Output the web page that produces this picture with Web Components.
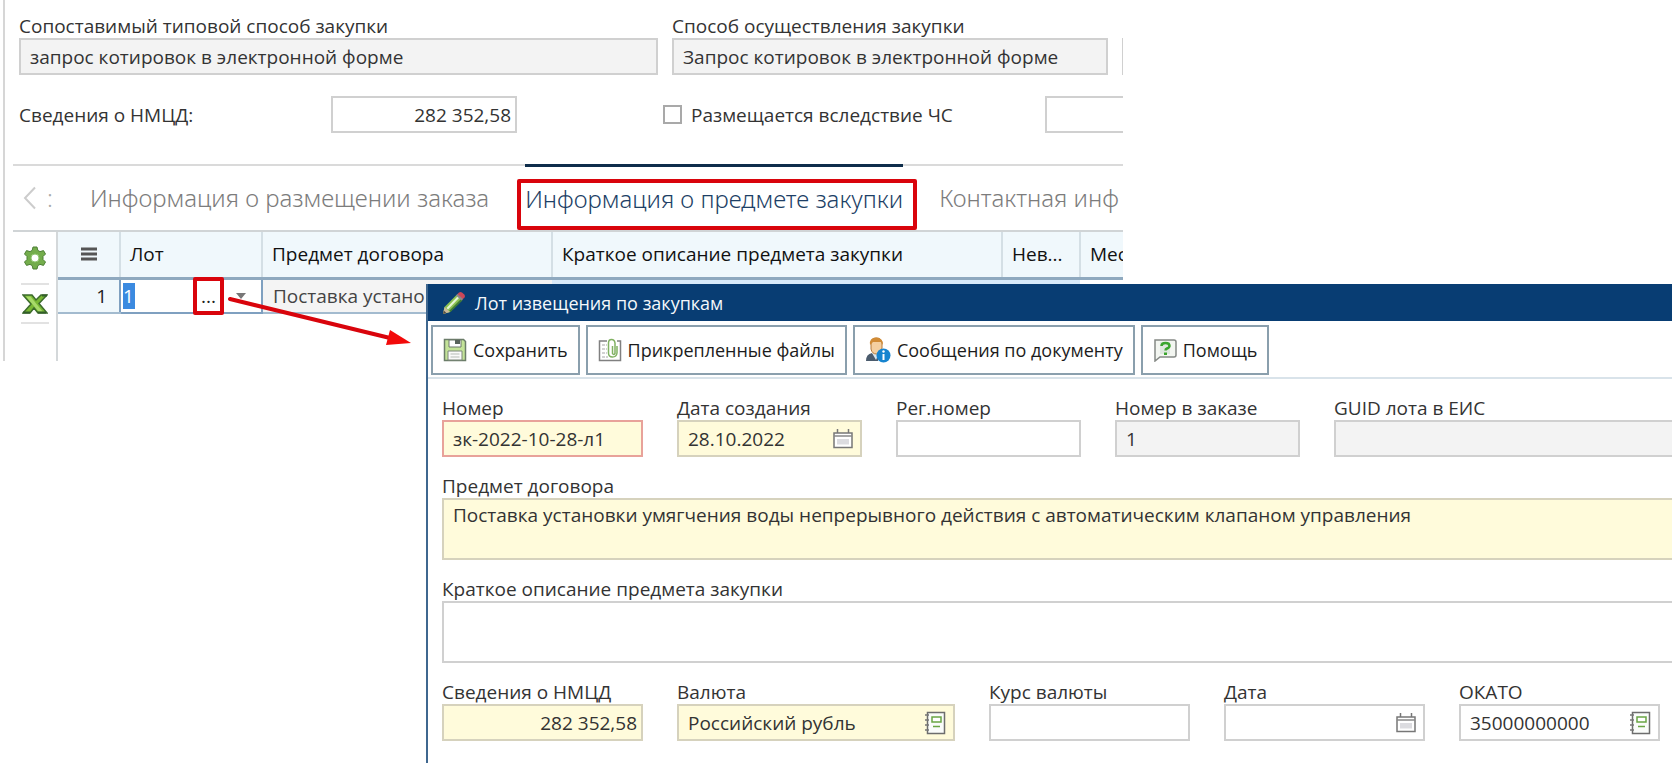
<!DOCTYPE html>
<html lang="ru">
<head>
<meta charset="utf-8">
<title>Лот извещения по закупкам</title>
<style>
  html, body { margin: 0; background: #fff; }
  body { font: 19px/24px "Open Sans", "Noto Sans", sans-serif; color: #333; }
</style>
</head>
<body>
<procurement-app></procurement-app>

<script>
const ICONS = {
  gear: [24, 24, `<g fill="#74ad4c" stroke="#4d7f35"><path d="M10 1h4l.8 3.400 2.200 1.200 3.500-1 2 3.400-2.500 2.500v3l2.500 2.500-2 3.400-3.500-1-2.200 1.200L14 23h-4l-.8-3.400L7 18.400l-3.500 1-2-3.400L4 13.500v-3L1.500 8l2-3.400 3.500 1 2.200-1.200z"/></g><circle cx="12" cy="12" r="4" fill="#fff" stroke="#8fc46f"/>`],
  excel: [26, 20, `<path d="M1 1h9l4 5 5-5h6l-8 8.500 8 9.500h-9l-4-5-4 5H1l8-9z" fill="#79b834" stroke="#3c6b2c" stroke-width="1.500"/><path d="M4 2.500h4.500L20.500 17.500h-4z" fill="#a8da6a"/><path d="M1 18.500h7M16 18.500h8M20 1.500h5" stroke="#335e2a" stroke-width="2"/>`],
  menu: [16, 14, `<path d="M0 2h16M0 7h16M0 12h16" stroke="#555" stroke-width="3"/>`],
  back: [14, 24, `<path d="M12 1.500 2 12l10 10.500" fill="none" stroke="#ccc" stroke-width="2"/>`],
  down: [10, 6, `<path d="M0 0h10L5 6z" fill="#777"/>`],
  pencil: [24, 24, `<path d="m1 23 1.500-7L15 3.500l5.500 5L8 21z" fill="#8cc152"/><path d="M4.500 17 16 5l1.500 1.500L6 18.500z" fill="#e6f5d5"/><path d="M7 20 19 8l1.500 1.500L8.500 21z" fill="#3f7b36"/><path d="m1 23 1.500-7L8 21z" fill="#c9b99a"/><path d="m1 23 .8-3.500 2.600 2.400z" fill="#554d43"/><path d="M15 3.500 17 1.500q1.500-1.200 3 0l2.500 2.300q1 1.400 0 2.700l-2 2z" fill="#cb4759"/><path d="m14 4.500 1.500-1.500 5.500 5-1.500 1.500z" fill="#8d8589"/>`],
  save: [24, 24, `<path d="M1.500 1.500h19l2 2v19h-21z" fill="#c3e398" stroke="#6b7d69" stroke-width="1.500"/><path d="M6 2h12v7H6z" fill="#fff" stroke="#6d796d"/><path d="M12 2h5v4h-5z" fill="#59645c"/><path d="M5 13h14v9H5z" fill="#fafafa" stroke="#7c877a"/><path d="M7.500 16h9M7.500 19h9" stroke="#b5bbb5"/>`],
  attach: [24, 24, `<path d="M9 3H1.500v19.500h21V3H19" fill="none" stroke="#808080" stroke-width="1.500"/><path d="M4 7h5M4 11h5M4 15h5M4 19h6" stroke="#c4c4c4" stroke-width="1.500" stroke-dasharray="3 1"/><path d="M14.500 8v7.500q1 2 2.500 0V5q-.5-3.500-3.500-3.500T10.500 5v10q0 4 4 4t4.500-4V8" fill="none" stroke="#80b162" stroke-width="1.500"/>`],
  message: [26, 26, `<path d="M1 24q0-7 6-8l6 4v4z" fill="#4b5b6d"/><path d="m7 16 4 7 3-7z" fill="#dce7ee"/><path d="M6 7q0-6 5.500-6T17 7v4q-1 6-5.500 6T6 12z" fill="#f5cf9f" stroke="#b57b3d"/><path d="M5 8q-1-7.500 6-7.500T18 8l-2-3H8z" fill="#d18b35"/><circle cx="18.500" cy="18.500" r="7" fill="#1684cf"/><path d="M18.500 17v6" stroke="#fff" stroke-width="2"/><circle cx="18.500" cy="14.500" r="1.200" fill="#fff"/>`],
  help: [24, 24, `<path d="M2 2h19q2 0 2 2v13q0 2-2 2H7l-5 4z" fill="#f3f6f1" stroke="#858985" stroke-width="1.500"/><path d="M7 4h10v12H7z" fill="#dfe8df"/><path d="M8.500 8q0-3 4-3T16.500 8q0 1.500-2.500 2.500-1.500.7-1.500 2" fill="none" stroke="#3aa52d" stroke-width="2.500"/><path d="M11 14.500h3v2.500h-3z" fill="#3aa52d"/>`],
  calendar: [20, 20, `<path d="M1 4h18v14.500H1z" fill="#fff" stroke="#777" stroke-width="1.500"/><path d="M1 7h18" stroke="#888" stroke-width="1.500"/><path d="M4.500 0v4M15.500 0v4" stroke="#777" stroke-width="1.500"/><path d="M4 10h12v5.500H4z" fill="#dcdce0"/>`],
  book: [22, 24, `<path d="M3.500 1.500h17v21h-17z" fill="#fafcfa" stroke="#6d6d6d" stroke-width="1.500"/><path d="M1 4h4M1 9h4M1 14h4M1 19h4" stroke="#777" stroke-width="1.500"/><path d="M8 6h9v5H8z" fill="#fff" stroke="#6aa544" stroke-width="1.500"/><path d="M9 15.500h7" stroke="#6aa544" stroke-width="1.500"/>`]
};

/* Draws one glyph of the icon set at its natural size. */
class AppIcon extends HTMLElement {
  constructor() {
    super();
    this.attachShadow({ mode: 'open' });
  }
  connectedCallback() {
    const [w, h, body] = ICONS[this.getAttribute('name')];
    this.shadowRoot.innerHTML = `<style>:host{display:inline-flex;flex:none}svg{display:block}</style>
      <svg width="${w}" height="${h}" viewBox="0 0 ${w} ${h}" aria-hidden="true">${body}</svg>`;
  }
}
customElements.define('app-icon', AppIcon);

/* Label over a text box; attributes: label, value, icon, tone, numeric, rows, readonly. */
class FormField extends HTMLElement {
  constructor() {
    super();
    this.attachShadow({ mode: 'open' });
  }
  connectedCallback() {
    const at = n => this.getAttribute(n) || '';
    const ro = this.hasAttribute('readonly') ? 'readonly' : '';
    const name = at('label') || at('name');
    const control = this.hasAttribute('rows')
      ? `<textarea id="c" ${ro}>${at('value')}</textarea>`
      : `<input id="c" type="text" value="${at('value')}" ${ro} ${at('label') ? '' : `aria-label="${name}"`}>`;
    this.shadowRoot.innerHTML = `<style>
      :host { display: block; flex: none; width: var(--w, auto); box-sizing: border-box; }
      label { display: block; height: 24px; white-space: nowrap; }
      .box { display: flex; align-items: center; box-sizing: border-box; height: 37px; border: 2px solid #d0d0d0; background: #fff; padding-right: 7px; }
      :host([rows]) .box { height: 62px; padding: 0; }
      :host([readonly]) .box { background: #f3f3f3; }
      :host([tone=required]) .box { background: #fffbdb; border-color: #d6d2bd; }
      :host([tone=error]) .box { background: #fffbdb; border-color: #e8a29a; }
      input, textarea { flex: 1; min-width: 0; width: 0; height: 100%; box-sizing: border-box; border: 0; outline: 0; background: none; margin: 0; padding: 0 0 0 9px; font: inherit; color: inherit; resize: none; overflow: hidden; }
      textarea { padding: 3px 9px; }
      :host([numeric]) .box { padding-right: 4px; }
      :host([numeric]) input { text-align: right; }
    </style>
    ${at('label') ? `<label for="c">${at('label')}</label>` : ''}
    <div class="box">${control}${at('icon') ? `<app-icon name="${at('icon')}"></app-icon>` : ''}</div>`;
  }
}
customElements.define('form-field', FormField);

/* Toolbar button: icon plus slotted caption. */
class ToolButton extends HTMLElement {
  constructor() {
    super();
    this.attachShadow({ mode: 'open' });
  }
  connectedCallback() {
    this.shadowRoot.innerHTML = `<style>
      :host { display: block; flex: none; }
      button { display: flex; align-items: center; gap: 6px; height: 50px; box-sizing: border-box; border: 2px solid #8a9fad; background: #fff; padding: 0 10px; font: inherit; font-size: 18px; color: #1c1c1c; white-space: nowrap; }
    </style><button type="button"><app-icon name="${this.getAttribute('icon')}"></app-icon><slot></slot></button>`;
  }
}
customElements.define('tool-button', ToolButton);

class TabBar extends HTMLElement {
  constructor() {
    super();
    this.attachShadow({ mode: 'open' }).innerHTML = `<style>
      :host { display: block; }
      nav { display: flex; height: 64px; border-top: 2px solid #dadada; padding-left: 10px; font: 300 24px/32px "Noto Sans", sans-serif; white-space: nowrap; }
      .scroll { display: flex; align-items: center; gap: 10px; width: 67px; flex: none; color: #aaa; }
      .scroll button { border: 0; background: none; padding: 0; display: flex; }
      .tabs { display: flex; gap: 36px; }
      a { position: relative; display: flex; align-items: center; box-sizing: border-box; color: #7c7c7c; text-decoration: none; }
      a.active { color: #1d3f66; margin-top: -2px; border-top: 3px solid #0e2d4b; }
      a.marked::after { content: ""; position: absolute; inset: 12px -14px 0 -8px; border: 4px solid #d9040c; border-radius: 2px; }
    </style>
    <nav aria-label="Разделы">
      <div class="scroll"><button type="button" aria-label="Назад"><app-icon name="back"></app-icon></button><span>:</span></div>
      <div class="tabs">
        <a href="#order">Информация о размещении заказа</a>
        <a href="#subject" class="active marked" aria-current="page">Информация о предмете закупки</a>
        <a href="#contacts">Контактная инф</a>
      </div>
    </nav>`;
  }
}
customElements.define('tab-bar', TabBar);

class LotGrid extends HTMLElement {
  constructor() {
    super();
    this.attachShadow({ mode: 'open' }).innerHTML = `<style>
      :host { display: flex; height: 131px; border-top: 2px solid #d0d4d6; box-sizing: border-box; }
      aside { display: flex; flex-direction: column; align-items: center; flex: none; width: 43px; box-sizing: border-box; }
      aside button { display: flex; align-items: center; justify-content: center; width: 28px; height: 39px; padding: 0; border: 0; border-bottom: 2px solid #e2e2e2; background: none; box-sizing: border-box; }
      aside button:first-child { height: 53px; }
      .area { flex: none; border-left: 2px solid #d4d8da; }
      table { table-layout: fixed; border-collapse: collapse; width: 1222px; color: #222; }
      th, td { box-sizing: border-box; padding: 0 9px; text-align: left; font-weight: 400; white-space: nowrap; overflow: hidden; }
      th { height: 46px; background: #f0f8fc; border-right: 2px solid #d4dfe5; border-bottom: 3px solid #8fa9bf; color: #111; }
      th:first-child { text-align: center; }
      td { height: 35px; border-bottom: 2px solid #a3bbcf; background: #fff; }
      td.num { background: #f0f8fc; text-align: right; padding-right: 12px; }
      td.text { background: #f4f4f4; padding-left: 10px; color: #444; }
      td.blue { background: #d8eafa; }
      td.edit { padding: 0; border: 2px solid #7fa0c0; overflow: visible; }
      .combo { display: flex; align-items: center; height: 31px; padding-left: 2px; }
      input { width: 12px; height: 26px; padding: 0; border: 0; background: #3b8ae0; color: #fff; font: inherit; }
      .combo button { position: relative; border: 0; background: none; padding: 0; font: inherit; color: inherit; display: flex; justify-content: center; }
      .more { width: 31px; margin-left: 58px; }
      .more::after { content: ""; position: absolute; inset: -7px 0; border: 4px solid #d9040c; border-radius: 2px; }
      .drop { width: 34px; }
    </style>
    <aside>
      <button type="button" aria-label="Настройки"><app-icon name="gear"></app-icon></button>
      <button type="button" aria-label="Экспорт в Excel"><app-icon name="excel"></app-icon></button>
    </aside>
    <div class="area"><table>
      <colgroup><col style="width:62px"><col style="width:142px"><col style="width:290px"><col style="width:450px"><col style="width:78px"><col style="width:200px"></colgroup>
      <thead><tr><th><app-icon name="menu"></app-icon></th><th>Лот</th><th>Предмет договора</th><th>Краткое описание предмета закупки</th><th>Нев...</th><th>Мес</th></tr></thead>
      <tbody><tr><td class="num">1</td>
        <td class="edit"><div class="combo"><input type="text" value="1" aria-label="Лот"><button type="button" class="more">...</button><button type="button" class="drop" aria-label="Список"><app-icon name="down"></app-icon></button></div></td>
        <td class="text">Поставка устано</td><td class="blue"></td><td class="blue"></td><td></td></tr></tbody>
    </table></div>`;
  }
}
customElements.define('lot-grid', LotGrid);

class OrderPanel extends HTMLElement {
  constructor() {
    super();
    this.attachShadow({ mode: 'open' }).innerHTML = `<style>
      :host { display: block; overflow: hidden; box-sizing: border-box; border-left: 2px solid #d6d6d6; }
      .form { padding: 14px 0 0 14px; }
      .row { display: flex; gap: 14px; }
      .row.second { gap: 0; align-items: center; margin-top: 21px; }
      .caption { flex: none; width: 312px; }
      .check { display: flex; align-items: center; gap: 9px; flex: none; width: 382px; margin-left: 146px; }
      input { appearance: none; width: 19px; height: 19px; margin: 0; border: 2px solid #a9a9a9; background: #fff; }
      .lower { margin: 31px 0 0 8px; }
    </style>
    <div class="form">
      <div class="row">
        <form-field readonly style="--w:639px" label="Сопоставимый типовой способ закупки" value="запрос котировок в электронной форме"></form-field>
        <form-field readonly style="--w:436px" label="Способ осуществления закупки" value="Запрос котировок в электронной форме"></form-field>
        <form-field style="--w:200px" label=" "></form-field>
      </div>
      <div class="row second">
        <span class="caption">Сведения о НМЦД:</span>
        <form-field name="Сведения о НМЦД" numeric style="--w:186px" value="282 352,58"></form-field>
        <label class="check"><input type="checkbox">Размещается вследствие ЧС</label>
        <form-field name="Дата размещения" style="--w:200px"></form-field>
      </div>
    </div>
    <div class="lower"><tab-bar></tab-bar><lot-grid></lot-grid></div>`;
  }
}
customElements.define('order-panel', OrderPanel);

class LotDialog extends HTMLElement {
  constructor() {
    super();
    this.attachShadow({ mode: 'open' }).innerHTML = `<style>
      :host { display: block; box-sizing: border-box; background: #fff; border-left: 2px solid #3f678f; overflow: hidden; }
      header { display: flex; align-items: center; gap: 9px; height: 37px; padding-left: 14px; background: #083d73; color: #f4f8fb; }
      h1 { margin: 0; font: inherit; font-size: 18px; }
      .tools { display: flex; gap: 6px; padding: 4px 0 2px 3px; border-bottom: 2px solid #d9e3ea; }
      form { display: flex; flex-direction: column; gap: 17px; padding: 17px 0 20px 14px; }
      .row { display: flex; gap: 34px; }
      .grow { flex: 1; }
      .wide { margin-right: -4px; }
    </style>
    <header><app-icon name="pencil"></app-icon><h1>Лот извещения по закупкам</h1></header>
    <div class="tools">
      <tool-button icon="save">Сохранить</tool-button>
      <tool-button icon="attach">Прикрепленные файлы</tool-button>
      <tool-button icon="message">Сообщения по документу</tool-button>
      <tool-button icon="help">Помощь</tool-button>
    </div>
    <form>
      <div class="row wide">
        <form-field tone="error" style="--w:201px" label="Номер" value="зк-2022-10-28-л1"></form-field>
        <form-field tone="required" icon="calendar" style="--w:185px" label="Дата создания" value="28.10.2022"></form-field>
        <form-field style="--w:185px" label="Рег.номер"></form-field>
        <form-field readonly style="--w:185px" label="Номер в заказе" value="1"></form-field>
        <form-field readonly class="grow" label="GUID лота в ЕИС"></form-field>
      </div>
      <form-field class="wide" rows="2" tone="required" label="Предмет договора" value="Поставка установки умягчения воды непрерывного действия с автоматическим клапаном управления"></form-field>
      <form-field class="wide" rows="2" label="Краткое описание предмета закупки"></form-field>
      <div class="row">
        <form-field tone="required" numeric style="--w:201px" label="Сведения о НМЦД" value="282 352,58"></form-field>
        <form-field tone="required" icon="book" style="--w:278px" label="Валюта" value="Российский рубль"></form-field>
        <form-field style="--w:201px" label="Курс валюты"></form-field>
        <form-field icon="calendar" style="--w:201px" label="Дата"></form-field>
        <form-field icon="book" style="--w:201px" label="ОКАТО" value="35000000000"></form-field>
      </div>
    </form>`;
  }
}
customElements.define('lot-dialog', LotDialog);

class ProcurementApp extends HTMLElement {
  constructor() {
    super();
    this.attachShadow({ mode: 'open' }).innerHTML = `<style>
      :host { display: block; position: relative; min-height: 100vh; overflow: hidden; }
      order-panel { margin: 0 549px 0 3px; }
      lot-dialog { position: absolute; top: 284px; left: 426px; right: 0; min-height: calc(100% - 284px); }
      .arrow { position: absolute; top: 292px; left: 225px; }
    </style>
    <order-panel></order-panel>
    <lot-dialog></lot-dialog>
    <svg class="arrow" width="190" height="60" viewBox="0 0 190 60" aria-hidden="true">
      <path d="M5 7 165 46" stroke="#d9040c" stroke-width="4" stroke-linecap="round"/>
      <path d="M165 38 186 51l-25 2z" fill="#f20a0a"/>
    </svg>`;
  }
}
customElements.define('procurement-app', ProcurementApp);
</script>
</body>
</html>
